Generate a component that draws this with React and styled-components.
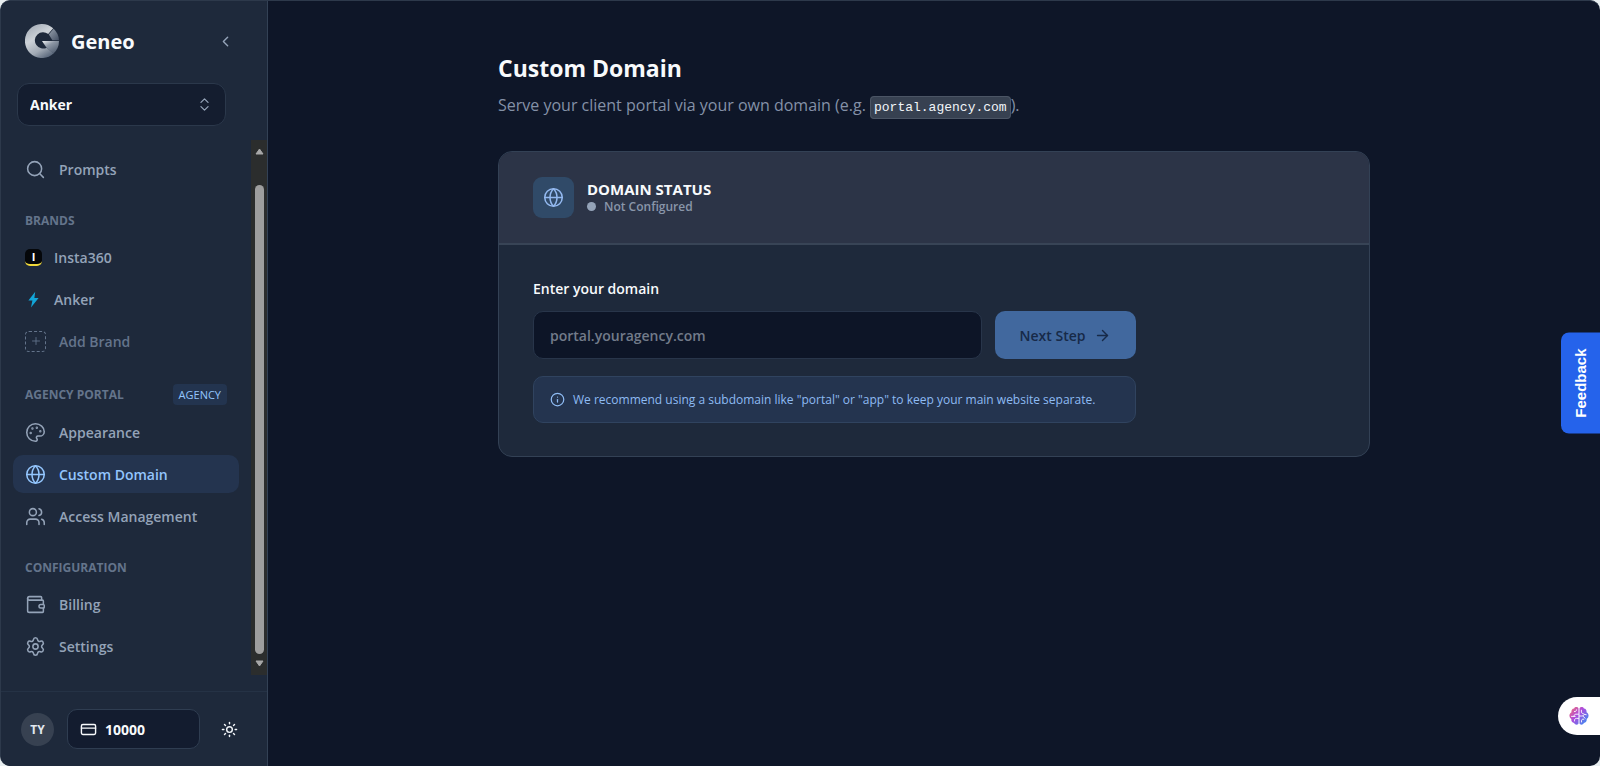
import React from "react";
import styled, { createGlobalStyle } from "styled-components";
import {
  Search, Palette, Globe, Users, Wallet, Settings, ChevronLeft, ChevronsUpDown,
  Plus, CreditCard, Sun, ArrowRight, Info,
} from "lucide-react";

const GlobalStyle = createGlobalStyle`
  *, *::before, *::after { box-sizing: border-box; }
  body {
    margin: 0;
    background: #e8eef0;
    font-family: "Open Sans", "Noto Sans", sans-serif;
    font-size: 14px;
    color: #f8fafc;
  }
  button, input, select { font: inherit; color: inherit; }
  h1, h2, p { margin: 0; }
`;

const Shell = styled.div`
  display: flex;
  min-height: 100vh;
  background: #0e1628;
  border: 1px solid #2d394b;
  border-bottom: 0;
  border-right: 0;
  border-radius: 10px;
  overflow: hidden;
`;

const Sidebar = styled.aside`
  display: flex;
  flex-direction: column;
  flex: none;
  width: 267px;
  background: #1e293b;
  border-right: 1px solid #334155;
`;

const SidebarTop = styled.div`
  display: flex;
  align-items: center;
  gap: 12px;
  padding: 23px 32px 25px 24px;
`;

const BrandName = styled.span`
  flex: 1;
  padding-top: 2px;
  font-size: 20px;
  line-height: 32px;
  font-weight: 700;
`;

const IconButton = styled.button`
  display: grid;
  place-items: center;
  width: 20px;
  height: 20px;
  padding: 0;
  border: 0;
  background: none;
  color: ${(p) => p.$color || "#94a3b8"};
`;

const SelectWrap = styled.div`
  display: grid;
  align-items: center;
  margin: 0 41px 14px 16px;
  color: #94a3b8;

  > * { grid-area: 1 / 1; }
  > svg { justify-self: end; margin-right: 13px; pointer-events: none; }
`;

const Select = styled.select`
  appearance: none;
  width: 100%;
  height: 43px;
  padding: 0 36px 0 12px;
  border: 1px solid #2b384b;
  border-radius: 12px;
  background: #141d2f;
  color: #f8fafc;
  font-weight: 700;
`;

const ScrollArea = styled.div`
  display: flex;
  flex: 1;
  margin-bottom: 16px;
`;

const Nav = styled.nav`
  display: flex;
  flex-direction: column;
  gap: 24px;
  flex: 1;
  min-width: 0;
  padding: 10px 12px 8px 12px;
`;

const Group = styled.section`
  display: flex;
  flex-direction: column;
  gap: 4px;
`;

const GroupHead = styled.div`
  display: flex;
  align-items: center;
  justify-content: space-between;
  min-height: 18px;
  margin-bottom: 4px;
  padding: 0 12px;
`;

const GroupTitle = styled.h2`
  font-size: 12px;
  line-height: 18px;
  font-weight: 700;
  color: #64748b;
`;

const Badge = styled.span`
  padding: 0 6px;
  border-radius: 4px;
  background: #23344f;
  color: #93c5fd;
  font-size: 11px;
  line-height: 21px;
  font-weight: 500;
`;

const NavLink = styled.a`
  display: flex;
  align-items: center;
  gap: ${(p) => (p.$compact ? 12 : 13)}px;
  height: 38px;
  padding: 0 12px;
  border-radius: 10px;
  background: ${(p) => (p.$active ? "#24344f" : "transparent")};
  color: ${(p) => (p.$active ? "#93c5fd" : p.$muted ? "#64748b" : "#94a3b8")};
  font-weight: 600;
  text-decoration: none;
`;

const InstaMark = styled.span`
  width: 17px;
  height: 17px;
  border-radius: 5px;
  background: #05070a;
  border-bottom: 2px solid #f0d83a;
  color: #fff;
  font-size: 11px;
  line-height: 15px;
  font-weight: 700;
  text-align: center;
`;

const DashedBox = styled.span`
  display: grid;
  place-items: center;
  width: 21px;
  height: 21px;
  border: 1px dashed #64748b;
  border-radius: 4px;
`;

const ScrollTrack = styled.div`
  display: flex;
  flex-direction: column;
  align-items: center;
  width: 16px;
  padding: 8px 0;
  background: #2b2d2d;
`;

const ScrollThumb = styled.div`
  flex: 1;
  width: 9px;
  margin: 30px 0 6px;
  border-radius: 5px;
  background: #9e9e9e;
`;

const SidebarFoot = styled.footer`
  display: flex;
  align-items: center;
  gap: 13px;
  height: 75px;
  padding: 0 28px 0 20px;
  border-top: 1px solid #253245;

  > :last-child { margin-left: auto; }
`;

const Avatar = styled.span`
  width: 33px;
  height: 33px;
  border-radius: 50%;
  background: #374151;
  color: #e2e8f0;
  font-size: 12px;
  line-height: 33px;
  font-weight: 700;
  text-align: center;
`;

const Credits = styled.button`
  display: flex;
  align-items: center;
  gap: 8px;
  width: 133px;
  height: 40px;
  padding: 0 12px;
  border: 1px solid #2f3d51;
  border-radius: 10px;
  background: #131c2f;
  font-weight: 700;
`;

const Main = styled.main`
  flex: 1;
  min-width: 0;
  padding: 49px 24px;
`;

const Content = styled.div`
  max-width: 872px;
  margin: 0 auto;
`;

const Title = styled.h1`
  font-size: 23px;
  line-height: 36px;
  font-weight: 700;
`;

const Lead = styled.p`
  margin-top: 6px;
  margin-bottom: 30px;
  font-size: 16px;
  line-height: 26px;
  color: #8491a7;
`;

const Code = styled.code`
  padding: 3px;
  border: 1px solid #4b5565;
  border-radius: 4px;
  background: #374151;
  color: #f1f5f9;
  font-family: "Liberation Mono", monospace;
  font-size: 13px;
`;

const Card = styled.section`
  border: 1px solid #334155;
  border-radius: 14px;
  background: #1e293b;
  overflow: hidden;
`;

const CardHead = styled.header`
  display: flex;
  align-items: center;
  gap: 13px;
  height: 93px;
  padding: 0 34px;
  background: #2c3447;
  border-bottom: 2px solid #384456;
`;

const IconTile = styled.span`
  display: grid;
  place-items: center;
  width: 41px;
  height: 41px;
  border-radius: 9px;
  background: #304a68;
  color: #93b9f0;
`;

const CardTitle = styled.h2`
  font-size: 15px;
  line-height: 18px;
  font-weight: 700;
`;

const Status = styled.p`
  display: flex;
  align-items: center;
  gap: 8px;
  font-size: 12px;
  line-height: 18px;
  font-weight: 600;
  color: #8996aa;

  &::before {
    content: "";
    width: 9px;
    height: 9px;
    border-radius: 50%;
    background: #94a3b8;
  }
`;

const Form = styled.form`
  display: flex;
  flex-direction: column;
  max-width: 671px;
  padding: 33px 34px;
`;

const Label = styled.label`
  margin-bottom: 11px;
  line-height: 22px;
  font-weight: 600;
`;

const FieldRow = styled.div`
  display: flex;
  gap: 13px;
`;

const DomainInput = styled.input`
  flex: 1;
  min-width: 0;
  height: 48px;
  padding: 0 16px;
  border: 1px solid #28354a;
  border-radius: 10px;
  background: #0d1527;
  font-weight: 600;

  &::placeholder { color: #727b8a; opacity: 1; }
`;

const NextButton = styled.button`
  display: flex;
  align-items: center;
  justify-content: center;
  gap: 9px;
  width: 141px;
  height: 48px;
  padding: 0;
  border: 0;
  border-radius: 10px;
  background: #41689e;
  color: #172a48;
  font-weight: 600;
`;

const Note = styled.p`
  display: flex;
  align-items: center;
  gap: 8px;
  min-height: 47px;
  margin-top: 17px;
  padding: 0 16px;
  border: 1px solid #30435f;
  border-radius: 10px;
  background: #24344f;
  color: #8ebbf3;
  font-size: 12px;
  font-weight: 500;

  > svg { flex: none; }
`;

const Feedback = styled.button`
  position: fixed;
  right: 0;
  top: 50%;
  width: 39px;
  height: 101px;
  transform: translateY(-50%);
  padding: 4px 0 0;
  border: 0;
  border-radius: 8px 0 0 8px;
  background: #2563eb;
  color: #fff;
  font-family: "Liberation Sans", Arial, sans-serif;
  font-size: 15px;
  font-weight: 700;

  > span {
    display: inline-block;
    writing-mode: vertical-rl;
    rotate: 180deg;
  }
`;

const Assistant = styled.button`
  position: fixed;
  right: 0;
  bottom: 31px;
  display: flex;
  align-items: center;
  width: 42px;
  height: 38px;
  padding: 0 0 0 11px;
  border: 0;
  border-radius: 19px 0 0 19px;
  background: #fff;
`;

function Logo() {
  return (
    <svg width="34" height="34" viewBox="0 0 34 34" aria-hidden="true">
      <defs>
        <linearGradient id="ring" x1="0.2" y1="0" x2="0.7" y2="1">
          <stop offset="0" stopColor="#a3abb6" />
          <stop offset="0.4" stopColor="#cdd2d8" />
          <stop offset="0.75" stopColor="#a2aab5" />
          <stop offset="1" stopColor="#5f6c7f" />
        </linearGradient>
        <linearGradient id="tail" x1="0" y1="0" x2="0.8" y2="1">
          <stop offset="0" stopColor="#f0f2f4" />
          <stop offset="0.4" stopColor="#8d97a5" />
          <stop offset="1" stopColor="#4c596d" />
        </linearGradient>
        <linearGradient id="wedge" x1="0" y1="0" x2="1" y2="1">
          <stop offset="0" stopColor="#98a1ae" />
          <stop offset="1" stopColor="#445064" />
        </linearGradient>
      </defs>
      <path d="M28.2 4.300A17 17 0 1 0 28.5 29.5L21.8 23.7A8.2 8.2 0 1 1 23.2 10Z" fill="url(#ring)" />
      <path d="M17 17H34A17 17 0 0 1 28.3 29.7L21.2 23.2Z" fill="url(#tail)" />
      <path d="M28.600 4.800A17 17 0 0 1 34 16.200H27.4L23.800 10.4Z" fill="url(#wedge)" />
    </svg>
  );
}

function Bolt() {
  return (
    <svg width="17" height="17" viewBox="0 0 17 17" aria-hidden="true">
      <path d="M10.2 0.8L3.4 9.6H7.4L6 16.4L13.6 7H9.4Z" fill="#12a5d8" />
    </svg>
  );
}

function BrainMark() {
  return (
    <svg width="20" height="20" viewBox="0 0 20 20" aria-hidden="true">
      <defs>
        <linearGradient id="brain" x1="0" y1="0" x2="1" y2="0.8">
          <stop offset="0" stopColor="#f4716c" />
          <stop offset="0.45" stopColor="#b04bdc" />
          <stop offset="1" stopColor="#3d8df2" />
        </linearGradient>
      </defs>
      <path
        d="M9.5 2.4C8.6.6 5.8.7 5.1 2.6 3.2 2.7 2 4.5 2.5 6.3.9 7.2 0 9 .6 10.6.9 11.9 1.6 12.7 2.3 13.1 2 15.2 3.3 16.8 5.1 17 6 19 8.6 19.3 9.5 17.5Z
           M10.5 2.4C11.4.6 14.2.7 14.9 2.6 16.8 2.7 18 4.5 17.5 6.3 19.1 7.2 20 9 19.4 10.6 19.1 11.9 18.4 12.7 17.7 13.1 18 15.2 16.7 16.8 14.9 17 14 19 11.4 19.3 10.5 17.5Z"
        fill="url(#brain)"
      />
      <path
        d="M7.6 3.8C7.6 5 6.6 5.8 5.4 5.6M9.5 8.2H7C5.6 8.2 5 9 5 10.4M2.5 10.4H6.2M9.5 12.4H7.4C6 12.4 5.3 13.4 5.5 15
           M12.4 4.2V6C12.4 7 13 7.5 14.2 7.5M10.5 10H12.8C14.2 10 14.9 9.4 15 8.3L17.2 8.7M14 10.2 16.2 12.3M12.5 16V14.6C12.5 13.5 13.3 13 14.8 13.2"
        fill="none" stroke="#fff" strokeWidth="0.9" strokeLinecap="round"
      />
    </svg>
  );
}

function Arrow({ down }) {
  return (
    <svg width="9" height="7" viewBox="0 0 9 7" aria-hidden="true">
      <path
        d={down ? "M1 1H8L4.5 6Z" : "M1 6H8L4.5 1Z"}
        fill="#a8a8a8" stroke="#a8a8a8" strokeLinejoin="round"
      />
    </svg>
  );
}

function Item({ icon: Icon, children, ...rest }) {
  return (
    <NavLink href="#" {...rest}>
      <Icon size={21} strokeWidth={1.75} />
      {children}
    </NavLink>
  );
}

export default function App() {
  return (
    <>
      <GlobalStyle />
      <Shell>
        <Sidebar>
          <SidebarTop>
            <Logo />
            <BrandName>Geneo</BrandName>
            <IconButton aria-label="Collapse sidebar"><ChevronLeft size={17} /></IconButton>
          </SidebarTop>
          <SelectWrap>
            <Select aria-label="Workspace" defaultValue="Anker">
              <option>Anker</option>
              <option>Insta360</option>
            </Select>
            <ChevronsUpDown size={17} strokeWidth={1.75} />
          </SelectWrap>
          <ScrollArea>
            <Nav>
              <Group>
                <Item icon={Search}>Prompts</Item>
              </Group>
              <Group>
                <GroupHead><GroupTitle>BRANDS</GroupTitle></GroupHead>
                <NavLink href="#" $compact><InstaMark aria-hidden="true">I</InstaMark>Insta360</NavLink>
                <NavLink href="#" $compact><Bolt />Anker</NavLink>
                <NavLink href="#" $muted>
                  <DashedBox><Plus size={12} strokeWidth={1.75} /></DashedBox>Add Brand
                </NavLink>
              </Group>
              <Group>
                <GroupHead><GroupTitle>AGENCY PORTAL</GroupTitle><Badge>AGENCY</Badge></GroupHead>
                <Item icon={Palette}>Appearance</Item>
                <Item icon={Globe} $active aria-current="page">Custom Domain</Item>
                <Item icon={Users}>Access Management</Item>
              </Group>
              <Group>
                <GroupHead><GroupTitle>CONFIGURATION</GroupTitle></GroupHead>
                <Item icon={Wallet}>Billing</Item>
                <Item icon={Settings}>Settings</Item>
              </Group>
            </Nav>
            <ScrollTrack aria-hidden="true">
              <Arrow />
              <ScrollThumb />
              <Arrow down />
            </ScrollTrack>
          </ScrollArea>
          <SidebarFoot>
            <Avatar>TY</Avatar>
            <Credits><CreditCard size={17} />10000</Credits>
            <IconButton aria-label="Toggle theme" $color="#f1f5f9"><Sun size={17} /></IconButton>
          </SidebarFoot>
        </Sidebar>
        <Main>
          <Content>
            <Title>Custom Domain</Title>
            <Lead>
              Serve your client portal via your own domain (e.g. <Code>portal.agency.com</Code>).
            </Lead>
            <Card>
              <CardHead>
                <IconTile><Globe size={21} strokeWidth={1.75} /></IconTile>
                <div>
                  <CardTitle>DOMAIN STATUS</CardTitle>
                  <Status>Not Configured</Status>
                </div>
              </CardHead>
              <Form onSubmit={(e) => e.preventDefault()}>
                <Label htmlFor="domain">Enter your domain</Label>
                <FieldRow>
                  <DomainInput id="domain" type="text" placeholder="portal.youragency.com" />
                  <NextButton type="submit" disabled>Next Step<ArrowRight size={17} /></NextButton>
                </FieldRow>
                <Note>
                  <Info size={15} />
                  We recommend using a subdomain like "portal" or "app" to keep your main website separate.
                </Note>
              </Form>
            </Card>
          </Content>
        </Main>
      </Shell>
      <Feedback><span>Feedback</span></Feedback>
      <Assistant aria-label="Open assistant"><BrainMark /></Assistant>
    </>
  );
}
